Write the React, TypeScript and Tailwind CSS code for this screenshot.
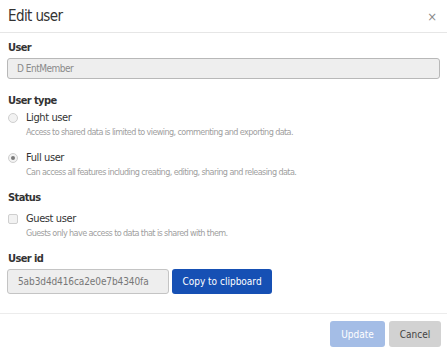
import React from 'react';

const font = { fontFamily: '"DejaVu Sans Condensed", "DejaVu Sans", sans-serif' };

const Label: React.FC<{ children: React.ReactNode; className?: string }> = ({ children, className }) => (
  <div className={`pl-[1px] text-[11px] leading-[14px] font-bold tracking-[-0.6px] text-[#333] ${className ?? ''}`}>{children}</div>
);

const Option: React.FC<{ kind: 'radio' | 'check'; checked?: boolean; title: string; desc: string; className?: string }> = ({ kind, checked, title, desc, className }) => (
  <div className={`flex ${className ?? ''}`}>
    <div className="w-[19px] pl-[1px] pt-[2px]">
      {kind === 'radio' ? (
        <div className="w-[10px] h-[10px] rounded-full border border-[#cfcfcf] bg-[#f2f2f2] flex items-center justify-center">
          {checked && <div className="w-[4px] h-[4px] rounded-full bg-[#7a7a7a]" />}
        </div>
      ) : (
        <div className="w-[10px] h-[10px] rounded-[2px] border border-[#cfcfcf] bg-[#f2f2f2]" />
      )}
    </div>
    <div>
      <div className="text-[11px] leading-[14px] tracking-[-0.4px] text-[#333]">{title}</div>
      <div className="mt-[1px] text-[9px] leading-[12px] tracking-[-0.6px] text-[#a0a0a0]">{desc}</div>
    </div>
  </div>
);

export default function App() {
  return (
    <div className="w-[447px] h-[350px] bg-white flex flex-col" style={font}>
      <div className="h-[33px] flex items-center justify-between pl-[8px] pr-[10px] border-b border-[#e6e6e6]">
        <div className="text-[15px] tracking-[-0.6px] text-[#333]">Edit user</div>
        <div className="text-[13px] text-[#8a8a8a] leading-none">×</div>
      </div>
      <div className="px-[7px] pt-[8px]">
        <Label>User</Label>
        <div className="mt-[3px] h-[21px] rounded-[3px] border border-[#b8b8b8] bg-[#eeeeee] flex items-center pl-[9px] text-[10px] tracking-[-0.5px] text-[#8a8a8a]">
          D EntMember
        </div>
        <Label className="mt-[15px]">User type</Label>
        <Option className="mt-[3px]" kind="radio" title="Light user" desc="Access to shared data is limited to viewing, commenting and exporting data." />
        <Option className="mt-[13px]" kind="radio" checked title="Full user" desc="Can access all features including creating, editing, sharing and releasing data." />
        <Label className="mt-[13px]">Status</Label>
        <Option className="mt-[7px]" kind="check" title="Guest user" desc="Guests only have access to data that is shared with them." />
        <Label className="mt-[13px]">User id</Label>
        <div className="mt-[3px] flex gap-[3px]">
          <div className="w-[162px] h-[25px] rounded-[3px] border border-[#c4c4c4] bg-[#eeeeee] flex items-center pl-[10px] text-[10px] tracking-[-0.1px] text-[#777]">
            5ab3d4d416ca2e0e7b4340fa
          </div>
          <button className="w-[100px] h-[25px] rounded-[3px] bg-[#1650b4] text-white text-[10px]">Copy to clipboard</button>
        </div>
      </div>
      <div className="mt-[19px] border-t border-[#ececec] flex justify-end gap-[4px] pt-[7px] pr-[6px]">
        <button className="w-[55px] h-[26px] rounded-[3px] bg-[#a4bde6] text-white text-[10px]">Update</button>
        <button className="w-[52px] h-[26px] rounded-[3px] bg-[#d2d2d2] text-[#444] text-[10px]">Cancel</button>
      </div>
    </div>
  );
}
